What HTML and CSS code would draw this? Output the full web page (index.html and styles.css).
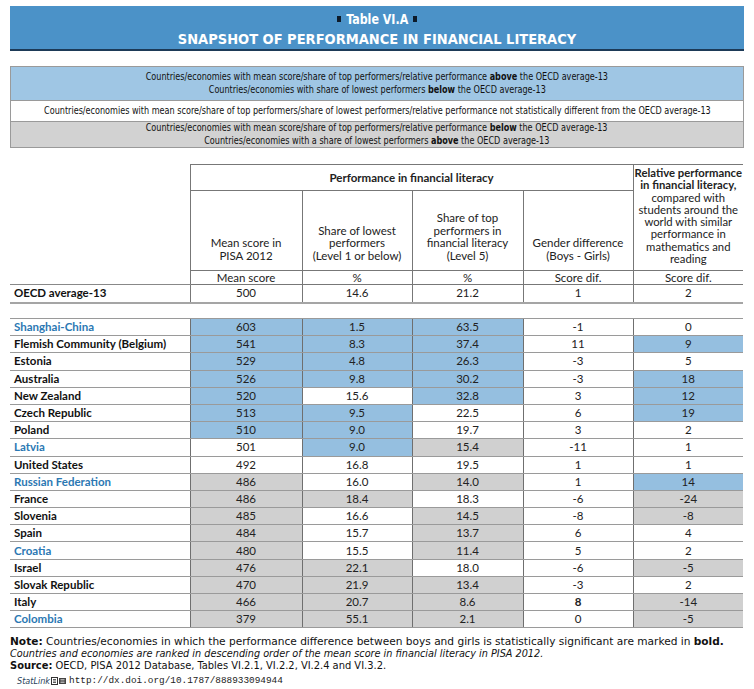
FILE: index.html
```html
<!DOCTYPE html>
<html>
<head>
<meta charset="utf-8">
<link rel="stylesheet" href="styles.css">
</head>
<body>
<div class="page">
  <div class="title">
    <div class="title-top"><span class="sq"></span><span class="tt">Table VI.A</span><span class="sq"></span></div>
    <div class="title-main"><span class="tm">SNAPSHOT OF PERFORMANCE IN FINANCIAL LITERACY</span></div>
  </div>

  <div class="legend">
    <div class="lg lg-blue">
      <div class="ln"><span class="sx">Countries/economies with mean score/share of top performers/relative performance <b>above</b> the OECD average-13</span></div>
      <div class="ln"><span class="sx">Countries/economies with share of lowest performers <b>below</b> the OECD average-13</span></div>
    </div>
    <div class="lg lg-white">
      <div class="ln"><span class="sx">Countries/economies with mean score/share of top performers/share of lowest performers/relative performance not statistically different from the OECD average-13</span></div>
    </div>
    <div class="lg lg-gray">
      <div class="ln"><span class="sx">Countries/economies with mean score/share of top performers/relative performance <b>below</b> the OECD average-13</span></div>
      <div class="ln"><span class="sx">Countries/economies with a share of lowest performers <b>above</b> the OECD average-13</span></div>
    </div>
  </div>

  <table class="data">
    <colgroup>
      <col class="c-country"><col class="c-mean"><col class="c-low"><col class="c-top"><col class="c-gen"><col class="c-rel">
    </colgroup>
    <thead>
      <tr class="h1">
        <th class="blank"></th>
        <th class="grp" colspan="4">Performance in financial literacy</th>
        <th class="rel" rowspan="2"><b>Relative performance<br>in financial literacy,</b><br>compared with<br>students around the<br>world with similar<br>performance in<br>mathematics and<br>reading</th>
      </tr>
      <tr class="h2">
        <th class="blank"></th>
        <th class="sub">Mean score in<br>PISA 2012</th>
        <th class="sub">Share of lowest<br>performers<br>(Level 1 or below)</th>
        <th class="sub">Share of top<br>performers in<br>financial literacy<br>(Level 5)</th>
        <th class="sub">Gender difference<br>(Boys - Girls)</th>
      </tr>
      <tr class="h3">
        <th class="blank-u"></th>
        <th class="u">Mean score</th>
        <th class="u">%</th>
        <th class="u">%</th>
        <th class="u">Score dif.</th>
        <th class="u">Score dif.</th>
      </tr>
      <tr class="avg">
        <td class="name">OECD average-13</td>
        <td>500</td><td>14.6</td><td>21.2</td><td>1</td><td>2</td>
      </tr>
      <tr class="spacer"><td colspan="6"></td></tr>
    </thead>
    <tbody>
      <tr class="first"><td class="name p">Shanghai-China</td><td class="b">603</td><td class="b">1.5</td><td class="b">63.5</td><td>-1</td><td>0</td></tr>
      <tr><td class="name">Flemish Community (Belgium)</td><td class="b">541</td><td class="b">8.3</td><td class="b">37.4</td><td>11</td><td class="b">9</td></tr>
      <tr><td class="name">Estonia</td><td class="b">529</td><td class="b">4.8</td><td class="b">26.3</td><td>-3</td><td>5</td></tr>
      <tr><td class="name">Australia</td><td class="b">526</td><td class="b">9.8</td><td class="b">30.2</td><td>-3</td><td class="b">18</td></tr>
      <tr><td class="name">New Zealand</td><td class="b">520</td><td>15.6</td><td class="b">32.8</td><td>3</td><td class="b">12</td></tr>
      <tr><td class="name">Czech Republic</td><td class="b">513</td><td class="b">9.5</td><td>22.5</td><td>6</td><td class="b">19</td></tr>
      <tr><td class="name">Poland</td><td class="b">510</td><td class="b">9.0</td><td>19.7</td><td>3</td><td>2</td></tr>
      <tr><td class="name p">Latvia</td><td>501</td><td class="b">9.0</td><td class="g">15.4</td><td>-11</td><td>1</td></tr>
      <tr><td class="name">United States</td><td>492</td><td>16.8</td><td>19.5</td><td>1</td><td>1</td></tr>
      <tr><td class="name p">Russian Federation</td><td class="g">486</td><td>16.0</td><td class="g">14.0</td><td>1</td><td class="b">14</td></tr>
      <tr><td class="name">France</td><td class="g">486</td><td class="g">18.4</td><td>18.3</td><td>-6</td><td class="g">-24</td></tr>
      <tr><td class="name">Slovenia</td><td class="g">485</td><td>16.6</td><td class="g">14.5</td><td>-8</td><td class="g">-8</td></tr>
      <tr><td class="name">Spain</td><td class="g">484</td><td>15.7</td><td class="g">13.7</td><td>6</td><td>4</td></tr>
      <tr><td class="name p">Croatia</td><td class="g">480</td><td>15.5</td><td class="g">11.4</td><td>5</td><td>2</td></tr>
      <tr><td class="name">Israel</td><td class="g">476</td><td class="g">22.1</td><td>18.0</td><td>-6</td><td class="g">-5</td></tr>
      <tr><td class="name">Slovak Republic</td><td class="g">470</td><td class="g">21.9</td><td class="g">13.4</td><td>-3</td><td>2</td></tr>
      <tr><td class="name">Italy</td><td class="g">466</td><td class="g">20.7</td><td class="g">8.6</td><td class="sig">8</td><td class="g">-14</td></tr>
      <tr><td class="name p">Colombia</td><td class="g">379</td><td class="g">55.1</td><td class="g">2.1</td><td>0</td><td class="g">-5</td></tr>
    </tbody>
  </table>

  <div class="notes">
    <div class="nl"><span class="n1"><b>Note:</b> Countries/economies in which the performance difference between boys and girls is statistically significant are marked in <b>bold.</b></span></div>
    <div class="nl"><span class="n2"><i>Countries and economies are ranked in descending order of the mean score in financial literacy in PISA 2012.</i></span></div>
    <div class="nl"><span class="n3"><b>Source:</b> OECD, PISA 2012 Database, Tables VI.2.1, VI.2.2, VI.2.4 and VI.3.2.</span></div>
    <div class="statlink"><span class="sl-word">StatLink</span><svg class="sl-icon" width="15" height="8" viewBox="0 0 15 8"><rect x="0.5" y="0.5" width="6" height="7" fill="none" stroke="#333" stroke-width="1"/><path d="M2 2.5h3M2 4h3M2 5.5h3" stroke="#333" stroke-width="0.8"/><path d="M8 1h7v6H8z" fill="#444"/><path d="M9.5 2.5h4M9.5 4h4M9.5 5.5h4" stroke="#ddd" stroke-width="0.7"/></svg><span class="url">http://dx.doi.org/10.1787/888933094944</span></div>
  </div>
</div>
</body>
</html>
```

FILE: styles.css
```css
* { box-sizing: border-box; }
body { margin: 0; background: #fff; color: #111; }
.page { width: 754px; padding: 6px 10px 0 10px; }

.title {
  height: 45px;
  background: #4b92c8;
  border-bottom: 2px solid #1d3a57;
  color: #fff;
  font-family: "DejaVu Sans Condensed", "DejaVu Sans", sans-serif;
  font-stretch: condensed;
  font-weight: bold;
}
.title-top { height: 20px; padding-top: 6px; display: flex; justify-content: center; align-items: center; gap: 5px; }
.tt { display: inline-block; font-size: 14px; line-height: 16px; white-space: nowrap; transform: scaleX(0.88); margin: 0 -4px; }
.sq { display: inline-block; width: 4px; height: 6px; background: #0d1b2a; }
.title-main { display: flex; justify-content: center; padding-top: 5px; }
.tm { display: inline-block; font-size: 14.5px; line-height: 16px; white-space: nowrap; }

.legend {
  margin-top: 15px;
  border: 1px solid #9a9a9a;
  font-family: "DejaVu Sans Condensed", "DejaVu Sans", sans-serif;
  font-stretch: condensed;
  font-size: 10px;
  color: #111;
}
.ln { display: flex; justify-content: center; }
.sx { display: inline-block; white-space: nowrap; transform: scaleX(0.9); }
.lg-blue { background: #9fc6e4; height: 33px; padding-top: 3px; line-height: 13px; }
.lg-white { background: #fff; height: 22px; line-height: 20px; border-top: 1px solid #9a9a9a; border-bottom: 1px solid #9a9a9a; }
.lg-gray { background: #d2d2d2; height: 25px; line-height: 12.5px; }

table.data {
  margin-top: 16px;
  width: 733px;
  border-collapse: collapse;
  table-layout: fixed;
  font-family: "Lato", "Open Sans", sans-serif;
  font-size: 11.5px;
  color: #222;
}
.c-country { width: 180px; }
.c-mean { width: 112px; }
.c-low { width: 110px; }
.c-top { width: 111px; }
.c-gen { width: 110px; }
.c-rel { width: 110px; }

table.data th { font-weight: normal; padding: 0; }
th.blank { border: none; }
th.blank-u { border: none; border-bottom: 1px solid #888; }
tr.h1 { height: 26px; }
tr.h1 th.grp { border: 1px solid #777; font-weight: bold; vertical-align: middle; }
tr.h1 th.rel { border-top: 1px solid #777; border-left: 1px solid #777; vertical-align: top; line-height: 12.3px; padding: 2px 0 0 0; white-space: nowrap; font-size: 11.3px; }
tr.h2 { height: 80px; }
tr.h2 th.sub { border-left: 1px solid #777; border-right: 1px solid #777; vertical-align: bottom; line-height: 12.4px; padding-bottom: 8px; }
tr.h3 { height: 14px; }
th.u { border: 1px solid #777; line-height: 12px; }
tr.h3 th.u:last-child { border-right: none; }

table.data td { padding: 0; text-align: center; vertical-align: middle; line-height: 14px; }
table.data td.name { text-align: left; padding-left: 4px; font-weight: bold; color: #111; }
table.data td.name.p { color: #2b78b3; }
tr.avg { height: 18px; }
tr.avg td { border-bottom: 2px solid #a5a5a5; }
tr.avg td + td { border-left: 1px solid #777; }
tr.spacer { height: 16px; }
tr.spacer td { border: none; }

tbody tr { height: 17.2px; }
tbody td { border-bottom: 1px solid #9a9a9a; }
tbody tr.first td { border-top: 1px solid #9a9a9a; }
tbody td + td { border-left: 1px solid #6f6f6f; }
td.b { background: #95bfe0; }
td.g { background: #d0d0d0; }
td.sig { font-weight: bold; }

.notes {
  margin-top: 8px;
  font-family: "DejaVu Sans Condensed", "DejaVu Sans", sans-serif;
  font-stretch: condensed;
  font-size: 11px;
  line-height: 12px;
  color: #111;
}
.nl { height: 12px; white-space: nowrap; }
.nl span { display: inline-block; transform-origin: 0 50%; }
.n1 { transform: scaleX(1.07); }
.n2 { transform: scaleX(0.98); }
.n3 { transform: scaleX(1.0); }
.statlink { display: flex; align-items: center; margin-top: 3px; height: 12px; padding-left: 7px; }
.sl-word { font-family: "DejaVu Sans", sans-serif; font-style: italic; font-size: 9px; color: #2a3f5a; }
.sl-icon { margin: 0 3px 0 1px; }
.url { font-family: "Liberation Mono", monospace; font-size: 9.4px; color: #222; }
```
